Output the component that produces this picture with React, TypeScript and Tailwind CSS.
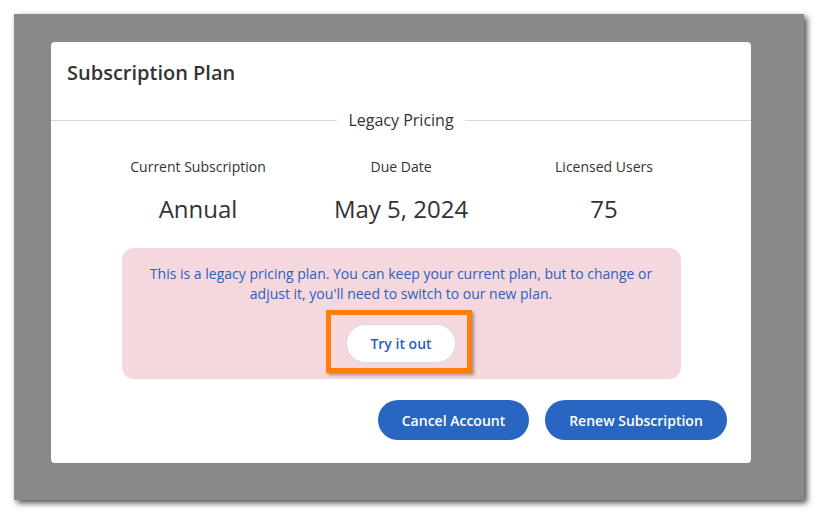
import React from "react";

export default function App() {
  return (
    <div
      className="w-[831px] h-[528px] bg-white pt-[14px] pl-[14px]"
      style={{ fontFamily: '"Open Sans", "Liberation Sans", sans-serif' }}
    >
      <div className="w-[790px] h-[486px] bg-[#898989] pt-[28px] pl-[37px] shadow-[3px_3px_6px_rgba(0,0,0,0.7)]">
        <div className="w-[700px] h-[421px] bg-white rounded-[4px] flex flex-col text-[#333333]">
          <div className="pl-4 pt-[17px] h-[66px] text-[20px] leading-[28px] font-semibold">
            Subscription Plan
          </div>
          <div className="flex items-center h-[24px]">
            <div className="flex-1 h-px bg-[#d3dae2]" />
            <div className="px-[11px] text-[16px] leading-[24px]">Legacy Pricing</div>
            <div className="flex-1 h-px bg-[#d3dae2]" />
          </div>
          <div className="w-[609px] mx-auto grid grid-cols-3 mt-[25px] text-center">
            {[
              ["Current Subscription", "Annual"],
              ["Due Date", "May 5, 2024"],
              ["Licensed Users", "75"],
            ].map(([label, value]) => (
              <div key={label} className="flex flex-col items-center">
                <div className="text-[14px] leading-[20px]">{label}</div>
                <div className="mt-[16px] text-[24px] leading-[32px]">{value}</div>
              </div>
            ))}
          </div>
          <div className="w-[559px] mx-auto mt-[23px] bg-[#f5d8dd] rounded-[12px] pt-[16px] pb-[16px] flex flex-col items-center">
            <p className="text-center text-[14px] leading-[20px] text-[#2c60c0] px-4">
              This is a legacy pricing plan. You can keep your current plan, but to change or
              <br />
              adjust it, you'll need to switch to our new plan.
            </p>
            <div className="relative mt-[20px]">
              <button className="w-[110px] h-[39px] rounded-full bg-white border border-[#d6dbe2] text-[#2c60c0] text-[14px] font-semibold">
                Try it out
              </button>
              <div className="absolute left-[-20px] right-[-16px] top-[-14px] bottom-[-10px] border-[5px] border-[#ff7f0a] shadow-[2px_2px_3px_rgba(0,0,0,0.35)] pointer-events-none" />
            </div>
          </div>
          <div className="flex justify-end gap-4 pr-6 mt-[21px]">
            <button className="w-[151px] h-[40px] rounded-full bg-[#2866c1] text-white text-[14px] font-semibold">
              Cancel Account
            </button>
            <button className="w-[182px] h-[40px] rounded-full bg-[#2866c1] text-white text-[14px] font-semibold">
              Renew Subscription
            </button>
          </div>
        </div>
      </div>
    </div>
  );
}
